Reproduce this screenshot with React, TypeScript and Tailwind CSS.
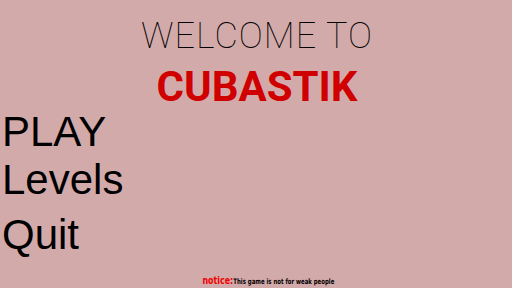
import React from "react";

export default function App() {
  return (
    <div className="w-[512px] h-[288px] bg-[#d3aaaa] flex flex-col overflow-hidden">
      <div className="flex flex-col items-center pt-[18px] pl-[2px]">
        <div className="text-[36px] leading-[36px] font-thin text-black tracking-[1px]" style={{ fontFamily: "Roboto, sans-serif" }}>
          WELCOME TO
        </div>
        <div className="mt-[12px] text-[42px] leading-[42px] font-bold text-[#d00000]" style={{ fontFamily: "Roboto, sans-serif" }}>
          CUBASTIK
        </div>
      </div>
      <div className="flex flex-col pl-[2px] mt-[3px] text-black text-[42px] leading-[42px]" style={{ fontFamily: '"Liberation Sans", Arial, sans-serif' }}>
        <div>PLAY</div>
        <div className="mt-[6px]">Levels</div>
        <div className="mt-[13px]">Quit</div>
      </div>
      <div className="mt-auto mb-[1px] flex justify-center pl-[25px]">
        <div className="flex items-baseline scale-x-[0.8] leading-[10px]" style={{ fontFamily: '"DejaVu Sans Condensed", "DejaVu Sans", sans-serif' }}>
          <span className="text-[11px] font-bold text-[#f00000]">notice:</span>
          <span className="text-[7.5px] font-bold text-black">This game is not for weak people</span>
        </div>
      </div>
    </div>
  );
}
